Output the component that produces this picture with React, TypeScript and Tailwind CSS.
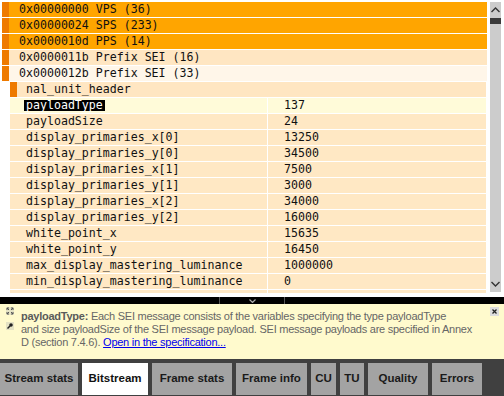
import React from 'react';

const nalRows = [
  { label: '0x00000000 VPS (36)', bg: 'bg-[#ffa500]' },
  { label: '0x00000024 SPS (233)', bg: 'bg-[#ffa500]' },
  { label: '0x0000010d PPS (14)', bg: 'bg-[#ffa500]' },
  { label: '0x0000011b Prefix SEI (16)', bg: 'bg-[#ffe6c2]' },
  { label: '0x0000012b Prefix SEI (33)', bg: 'bg-[#fff6e9]' },
];

const fields: [string, string][] = [
  ['payloadType', '137'],
  ['payloadSize', '24'],
  ['display_primaries_x[0]', '13250'],
  ['display_primaries_y[0]', '34500'],
  ['display_primaries_x[1]', '7500'],
  ['display_primaries_y[1]', '3000'],
  ['display_primaries_x[2]', '34000'],
  ['display_primaries_y[2]', '16000'],
  ['white_point_x', '15635'],
  ['white_point_y', '16450'],
  ['max_display_mastering_luminance', '1000000'],
  ['min_display_mastering_luminance', '0'],
  ['', ''],
];

const tabs = [
  { name: 'Stream stats', w: 'w-[78px]' },
  { name: 'Bitstream', w: 'w-[66px]', active: true },
  { name: 'Frame stats', w: 'w-[80px]' },
  { name: 'Frame info', w: 'w-[71px]' },
  { name: 'CU', w: 'w-[25px]' },
  { name: 'TU', w: 'w-[24px]' },
  { name: 'Quality', w: 'w-[60px]' },
  { name: 'Errors', w: 'w-[50px]' },
];

const Chevron: React.FC<{ down?: boolean; className?: string }> = ({ down, className }) => (
  <svg width="9" height="6" viewBox="0 0 9 6" className={className}>
    <path
      d={down ? 'M0.5 1 L4.5 5 L8.5 1' : 'M0.5 5 L4.5 1 L8.5 5'}
      fill="none"
      stroke="currentColor"
      strokeWidth="1.4"
    />
  </svg>
);

const App: React.FC = () => {
  return (
    <div className="w-[504px] h-[396px] bg-white flex flex-col overflow-hidden text-[#111] font-['DejaVu_Sans_Mono',monospace] text-[11.6px]">
      {/* Tree + scrollbar */}
      <div className="h-[297px] flex pt-[2px] shrink-0">
        <div className="w-[485px] ml-[2px] h-[291px] overflow-hidden flex flex-col gap-px">
          {nalRows.map((r) => (
            <div key={r.label} className="flex h-[15px] shrink-0">
              <div className="w-[7px] bg-[#ee7a00]" />
              <div className={`flex-1 ${r.bg} pl-[10px] leading-[15px] whitespace-pre`}>{r.label}</div>
            </div>
          ))}
          <div className="flex h-[15px] shrink-0 ml-[8px] mr-px">
            <div className="w-[7px] bg-[#ee7a00]" />
            <div className="flex-1 bg-[#ffe6c2] pl-[9px] leading-[15px]">nal_unit_header</div>
          </div>
          {fields.map(([k, v], i) => (
            <div key={i} className="flex h-[15px] shrink-0 ml-[8px] mr-px gap-px leading-[15px]">
              <div className={`w-[257px] pl-[14px] ${i === 0 ? 'bg-[#fffbd9]' : 'bg-[#ffe8c4]'}`}>
                {i === 0 ? (
                  <span className="bg-black text-white px-[2px] inline-block leading-[11px]">{k}</span>
                ) : (
                  <span className="px-[2px]">{k}</span>
                )}
              </div>
              <div className={`flex-1 pl-[16px] ${i === 0 ? 'bg-[#fffbd9]' : 'bg-[#ffe8c4]'}`}>{v}</div>
            </div>
          ))}
        </div>
        <div className="w-[11px] ml-[3px] h-[290px] bg-[#cccccc] flex flex-col items-center text-[#333]">
          <Chevron className="mt-[5px]" />
          <div className="w-full h-[6px] bg-[#3a3a3a] mt-[5px]" />
          <div className="flex-1" />
          <Chevron down className="mb-[5px]" />
        </div>
      </div>

      {/* Splitter */}
      <div className="h-[7px] bg-black flex shrink-0">
        <div className="w-[219px]" />
        <div className="w-px bg-[#555]" />
        <div className="w-[64px] flex justify-center items-center text-[#aaa]">
          <svg width="7" height="4" viewBox="0 0 7 4">
            <path d="M0.5 0.5 L3.5 3.5 L6.5 0.5" fill="none" stroke="currentColor" strokeWidth="1.2" />
          </svg>
        </div>
        <div className="w-px bg-[#555]" />
      </div>

      {/* Info panel */}
      <div className="h-[55px] bg-[#fffacd] flex shrink-0 font-['Liberation_Sans',Arial,sans-serif] text-[11px] tracking-[-0.25px]">
        <div className="w-[18px] flex flex-col items-center pt-[3px] gap-[7px] pl-[2px]">
          <svg width="8" height="8" viewBox="0 0 8 8">
            <rect width="8" height="8" fill="#e4e2c4" />
            <path d="M1 1 L3 3 M7 1 L5 3 M1 7 L3 5 M7 7 L5 5" stroke="#555" strokeWidth="1" />
            <path d="M1 1 H3 M1 1 V3 M7 1 H5 M7 1 V3 M1 7 H3 M1 7 V5 M7 7 H5 M7 7 V5" stroke="#555" strokeWidth="1" />
          </svg>
          <svg width="8" height="8" viewBox="0 0 8 8">
            <rect width="8" height="8" fill="#e4e2c4" />
            <circle cx="5" cy="3" r="1.8" fill="#222" />
            <path d="M4 4 L1.5 6.5" stroke="#222" strokeWidth="1.4" />
          </svg>
        </div>
        <div className="flex-1 pl-[3px] pt-[6px] leading-[13px] text-[#666] whitespace-nowrap">
          <b className="text-[#5a5a5a]">payloadType:</b> Each SEI message consists of the variables specifying the type payloadType
          <br />
          and size payloadSize of the SEI message payload. SEI message payloads are specified in Annex
          <br />
          D (section 7.4.6). <span className="text-[#0000ee] underline">Open in the specification...</span>
        </div>
        <div className="w-[14px] pt-[3px] pr-[4px]">
          <div className="w-[9px] h-[9px] bg-[#dddddd] flex items-center justify-center">
            <svg width="5" height="5" viewBox="0 0 5 5">
              <path d="M0.5 0.5 L4.5 4.5 M4.5 0.5 L0.5 4.5" stroke="#222" strokeWidth="1.3" />
            </svg>
          </div>
        </div>
      </div>

      {/* Tab bar */}
      <div className="flex-1 bg-[#404040] pt-[4px] pb-px flex gap-[4px] font-['Liberation_Sans',Arial,sans-serif] text-[11.5px] font-bold">
        {tabs.map((t) => (
          <div
            key={t.name}
            className={`${t.w} flex items-center justify-center whitespace-nowrap ${t.active ? 'bg-white text-[#111]' : 'bg-[#a3a3a3] text-[#1a1a1a]'}`}
          >
            {t.name}
          </div>
        ))}
      </div>
    </div>
  );
};

export default App;
